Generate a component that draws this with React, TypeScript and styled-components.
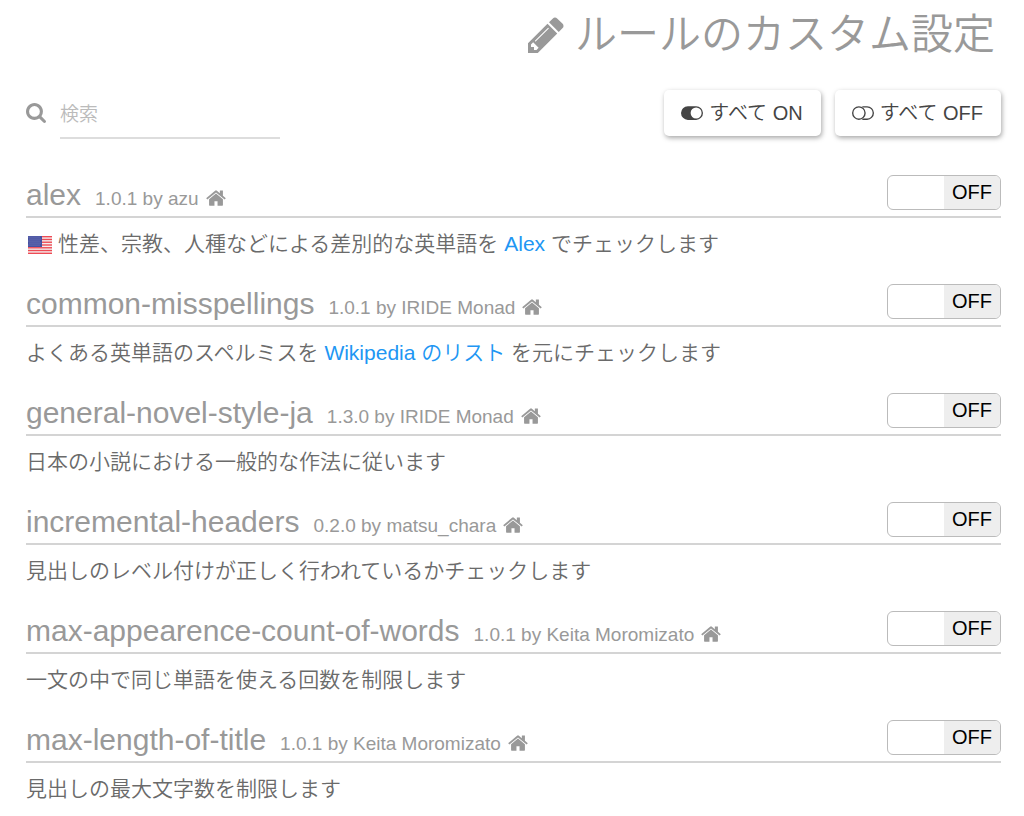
import React, { useState } from "react";
import styled, { createGlobalStyle } from "styled-components";

const GlobalStyle = createGlobalStyle`
  *, *::before, *::after { box-sizing: border-box; }
  body {
    margin: 0;
    background: #fff;
    color: #6a6a6a;
    font-family: "Liberation Sans", "Noto Sans CJK JP", sans-serif;
    font-weight: 350;
    font-size: 21px;
  }
`;

const Page = styled.main`
  padding: 9px 23px 0 26px;
`;

const Title = styled.h1`
  display: flex;
  align-items: center;
  justify-content: flex-end;
  gap: 11px;
  margin: 0;
  padding-right: 6px;
  color: #999;
  font-size: 42px;
  line-height: 52px;
  font-weight: 350;
`;

const Toolbar = styled.div`
  display: flex;
  align-items: flex-start;
  gap: 14px;
  margin: 29px 0 36px;
`;

const SearchLabel = styled.label`
  display: flex;
  align-self: center;
  padding-bottom: 3px;
  color: #999;
`;

const SearchInput = styled.input`
  width: 220px;
  height: 49px;
  margin-right: auto;
  padding: 2px 0 0;
  border: 0;
  border-bottom: 2px solid #ddd;
  background: transparent;
  color: #666;
  font: inherit;
  font-size: 19px;
  outline: none;
  &::placeholder { color: #bbb; opacity: 1; }
`;

const BulkButton = styled.button`
  display: flex;
  align-items: center;
  gap: 6px;
  height: 46px;
  padding: 0 18px 0 17px;
  border: 0;
  border-radius: 5px;
  background: #fff;
  box-shadow: 1px 2px 5px rgba(0, 0, 0, 0.35);
  color: #444;
  font: inherit;
  font-size: 20px;
  line-height: 30px;
  white-space: nowrap;
  cursor: pointer;
`;

const RuleList = styled.ul`
  margin: 0;
  padding: 0;
  list-style: none;
`;

const Rule = styled.li`
  padding-bottom: 25px;
  &:last-child { padding-bottom: 0; }
`;

const RuleHeader = styled.div`
  display: flex;
  align-items: flex-start;
  height: 43px;
  border-bottom: 2px solid #d4d4d4;
`;

const RuleName = styled.h2`
  flex: 1;
  margin: 0;
  color: #999;
  font-size: 30px;
  line-height: 40px;
  font-weight: 350;
`;

const Meta = styled.small`
  margin-left: 14px;
  font-size: 19px;
`;

const HomeLink = styled.a`
  margin-left: 7px;
  color: inherit;
  svg { vertical-align: -1px; }
`;

const Description = styled.p`
  margin: 0;
  padding-top: 10px;
  line-height: 31px;
`;

const TextLink = styled.a`
  color: #2196f3;
  text-decoration: none;
`;

const Switch = styled.label`
  position: relative;
  display: flex;
  width: 114px;
  height: 35px;
  overflow: hidden;
  border: 1px solid #bbb;
  border-radius: 6px;
  background: #fff;
  cursor: pointer;
`;

const SwitchInput = styled.input`
  position: absolute;
  inset: 0;
  width: 100%;
  height: 100%;
  margin: 0;
  opacity: 0;
  cursor: pointer;
`;

const SwitchText = styled.span<{ $on: boolean }>`
  width: 50%;
  margin-left: ${(p) => (p.$on ? "0" : "50%")};
  background: ${(p) => (p.$on ? "#2196f3" : "#eee")};
  color: ${(p) => (p.$on ? "#fff" : "#000")};
  font-size: 20px;
  line-height: 32px;
  text-align: center;
`;

const FlagIcon = styled.svg`
  margin: 0 6px 0 2px;
  vertical-align: -3px;
`;

const PencilIcon = () => (
  <svg width="36" height="42" viewBox="0 0 1536 1792" fill="currentColor" aria-hidden="true">
    <path d="M363 1536l91-91-235-235-91 91v107h128v128h107zm523-928q0-22-22-22-10 0-17 7l-542 542q-7 7-7 17 0 22 22 22 10 0 17-7l542-542q7-7 7-17zm-54-192l416 416-832 832H0v-416zm683 96q0 53-37 90l-166 166-416-416 166-165q36-38 90-38 53 0 91 38l235 234q37 39 37 91z" />
  </svg>
);

const SearchIcon = () => (
  <svg width="20" height="20" viewBox="0 128 1664 1664" fill="currentColor" aria-hidden="true">
    <path d="M1152 832q0-185-131.500-316.500t-316.500-131.500-316.500 131.500-131.500 316.500 131.500 316.500 316.500 131.500 316.500-131.500 131.500-316.500zm512 832q0 52-38 90t-90 38q-54 0-90-38l-343-342q-179 124-399 124-143 0-273.500-55.500t-225-150-150-225-55.500-273.500 55.500-273.500 150-225 225-150 273.500-55.500 273.500 55.500 225 150 150 225 55.500 273.500q0 220-124 399l343 343q37 37 37 90z" />
  </svg>
);

const HomeIcon = () => (
  <svg width="20" height="16" viewBox="64 224 1664 1328" fill="currentColor" aria-hidden="true">
    <path d="M1472 992v480q0 26-19 45t-45 19h-384v-384h-256v384h-384q-26 0-45-19t-19-45v-480q0-1 .5-3t.5-3l575-474 575 474q1 2 1 6zm223-69l-62 74q-8 9-21 11h-3q-13 0-21-7l-692-577-692 577q-12 8-24 7-13-2-21-11l-62-74q-8-10-7-23.500t11-21.500l719-599q32-26 76-26t76 26l244 204v-195q0-14 9-23t23-9h192q14 0 23 9t9 23v408l219 182q10 8 11 21.500t-7 23.500z" />
  </svg>
);

const ToggleOnIcon = () => (
  <svg width="22" height="14" viewBox="0 0 2048 1280" fill="currentColor" aria-hidden="true">
    <path
      fillRule="evenodd"
      d="M640 0h768a640 640 0 0 1 0 1280H640A640 640 0 0 1 640 0zm768 128a512 512 0 1 0 0 1024a512 512 0 1 0 0-1024z"
    />
  </svg>
);

const ToggleOffIcon = () => (
  <svg width="22" height="14" viewBox="0 0 2048 1280" fill="none" stroke="currentColor" strokeWidth="128" aria-hidden="true">
    <circle cx="640" cy="640" r="576" />
    <path d="M960 64h448a576 576 0 0 1 0 1152H960" />
  </svg>
);

const UsFlag = () => (
  <FlagIcon width="24" height="18" viewBox="0 0 24 18" role="img" aria-label="US">
    <rect width="24" height="18" fill="#f4eeee" />
    {[0, 1, 2, 3, 4, 5, 6].map((i) => (
      <rect key={i} y={(i * 36) / 13} width="24" height={18 / 13} fill="#ee4b55" />
    ))}
    <rect width="14" height="11" fill="#4650a0" />
    {[1, 3, 5, 7, 9].map((y) =>
      [1, 3, 5, 7, 9, 11].map((x) => (
        <circle key={`${x}-${y}`} cx={x + (y % 4 === 3 ? 1 : 0)} cy={y} r="0.4" fill="#c9cbe8" />
      )),
    )}
  </FlagIcon>
);

interface RuleData {
  name: string;
  version: string;
  author: string;
  description: React.ReactNode;
}

const rules: RuleData[] = [
  {
    name: "alex",
    version: "1.0.1",
    author: "azu",
    description: (
      <>
        <UsFlag />
        性差、宗教、人種などによる差別的な英単語を <TextLink href="#alex">Alex</TextLink> でチェックします
      </>
    ),
  },
  {
    name: "common-misspellings",
    version: "1.0.1",
    author: "IRIDE Monad",
    description: (
      <>
        よくある英単語のスペルミスを <TextLink href="#wikipedia">Wikipedia のリスト</TextLink> を元にチェックします
      </>
    ),
  },
  {
    name: "general-novel-style-ja",
    version: "1.3.0",
    author: "IRIDE Monad",
    description: "日本の小説における一般的な作法に従います",
  },
  {
    name: "incremental-headers",
    version: "0.2.0",
    author: "matsu_chara",
    description: "見出しのレベル付けが正しく行われているかチェックします",
  },
  {
    name: "max-appearence-count-of-words",
    version: "1.0.1",
    author: "Keita Moromizato",
    description: "一文の中で同じ単語を使える回数を制限します",
  },
  {
    name: "max-length-of-title",
    version: "1.0.1",
    author: "Keita Moromizato",
    description: "見出しの最大文字数を制限します",
  },
];

export default function App() {
  const [query, setQuery] = useState("");
  const [enabled, setEnabled] = useState<Record<string, boolean>>({});

  const setAll = (on: boolean) => setEnabled(Object.fromEntries(rules.map((r) => [r.name, on])));

  return (
    <>
      <GlobalStyle />
      <Page lang="ja">
        <Title>
          <PencilIcon />
          ルールのカスタム設定
        </Title>
        <Toolbar>
          <SearchLabel htmlFor="search" aria-label="検索">
            <SearchIcon />
          </SearchLabel>
          <SearchInput
            id="search"
            type="text"
            placeholder="検索"
            value={query}
            onChange={(e) => setQuery(e.target.value)}
          />
          <BulkButton type="button" onClick={() => setAll(true)}>
            <ToggleOnIcon />
            すべて ON
          </BulkButton>
          <BulkButton type="button" onClick={() => setAll(false)}>
            <ToggleOffIcon />
            すべて OFF
          </BulkButton>
        </Toolbar>
        <RuleList>
          {rules
            .filter((r) => r.name.includes(query))
            .map((r) => (
              <Rule key={r.name}>
                <RuleHeader>
                  <RuleName>
                    {r.name}
                    <Meta>
                      {r.version} by {r.author}
                      <HomeLink href={`#${r.name}`} aria-label={`${r.name} home`}>
                        <HomeIcon />
                      </HomeLink>
                    </Meta>
                  </RuleName>
                  <Switch>
                    <SwitchInput
                      type="checkbox"
                      aria-label={r.name}
                      checked={!!enabled[r.name]}
                      onChange={(e) => setEnabled({ ...enabled, [r.name]: e.target.checked })}
                    />
                    <SwitchText $on={!!enabled[r.name]}>{enabled[r.name] ? "ON" : "OFF"}</SwitchText>
                  </Switch>
                </RuleHeader>
                <Description>{r.description}</Description>
              </Rule>
            ))}
        </RuleList>
      </Page>
    </>
  );
}
